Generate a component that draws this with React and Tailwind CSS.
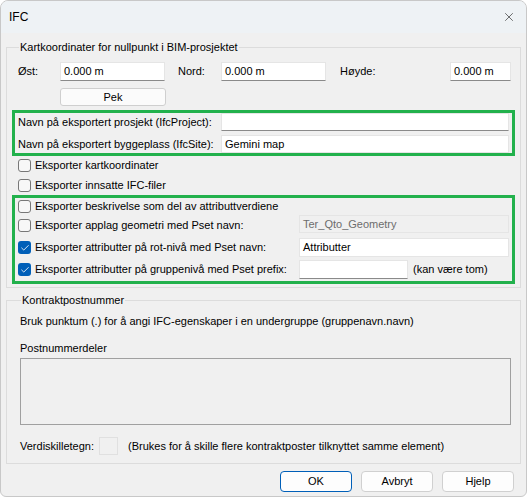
import React from 'react';
import { X, Check } from 'lucide-react';

const font = { fontFamily: '"Segoe UI", "Liberation Sans", Arial, sans-serif' };

const TextBox = ({ value = '', className = '', disabled = false }) => (
  <div
    className={`flex items-center px-[3px] border border-[#e5e5e5] border-b-[#8a8a8a] ${
      disabled ? 'bg-[#f0f0f0] text-[#6d6d6d] border-b-[#e5e5e5]' : 'bg-white text-black'
    } ${className}`}
  >
    {value}
  </div>
);

const CheckBox = ({ checked, label }) => (
  <div className="flex items-center gap-[4px]">
    {checked ? (
      <span className="w-[13px] h-[13px] shrink-0 rounded-[3px] bg-[#005fb8] flex items-center justify-center">
        <Check className="w-[10px] h-[10px] text-white" strokeWidth={2} />
      </span>
    ) : (
      <span className="w-[13px] h-[13px] shrink-0 rounded-[3px] border border-[#777] bg-[#f7f7f7]" />
    )}
    <span>{label}</span>
  </div>
);

const Button = ({ children, primary }) => (
  <button
    className={`w-[72px] h-[21px] rounded-[4px] bg-[#fdfdfd] text-black ${
      primary ? 'border border-[#005fb8]' : 'border border-[#d0d0d0]'
    }`}
  >
    {children}
  </button>
);

export default function App() {
  return (
    <div
      className="w-[527px] h-[497px] bg-[#f0f0f0] text-[11px] leading-[15px] text-black whitespace-nowrap border border-[#c8c8c8] rounded-t-[8px] rounded-b-[6px] overflow-hidden flex flex-col"
      style={font}
    >
      <div className="h-[32px] shrink-0 bg-[#eef2f5] flex items-center justify-between pl-[8px] pr-[10px] text-[12px]">
        <span>IFC</span>
        <X className="w-[14px] h-[14px] text-[#333]" strokeWidth={1.2} />
      </div>

      <div className="flex flex-col px-[5px] pt-[7px]">
        <fieldset className="border border-[#dcdcdc] pb-[3px] pl-[11px] pr-[9px]">
          <legend className="px-[1px] ml-[1px]">Kartkoordinater for nullpunkt i BIM-prosjektet</legend>

          <div className="flex items-center mt-[7px]">
            <span className="w-[42px]">Øst:</span>
            <TextBox value="0.000 m" className="w-[105px] h-[19px]" />
            <span className="ml-[13px] w-[43px]">Nord:</span>
            <TextBox value="0.000 m" className="w-[105px] h-[19px]" />
            <span className="ml-[14px] flex-1">Høyde:</span>
            <TextBox value="0.000 m" className="w-[61px] h-[19px]" />
          </div>

          <div className="ml-[42px] mt-[7px]">
            <button className="w-[106px] h-[18px] rounded-[3px] border border-[#cfcfcf] bg-[#fbfbfb] leading-[14px]">
              Pek
            </button>
          </div>

          <div className="-ml-[6px] -mr-[4px] mt-[4px] border-[3px] border-[#22b14c] px-[3px] flex flex-col gap-[4px]">
            <div className="flex items-center">
              <span className="w-[203px]">Navn på eksportert prosjekt (IfcProject):</span>
              <TextBox className="flex-1 h-[18px]" />
            </div>
            <div className="flex items-center">
              <span className="w-[203px]">Navn på eksportert byggeplass (IfcSite):</span>
              <TextBox value="Gemini map" className="flex-1 h-[18px] border-b-[#e5e5e5]" />
            </div>
          </div>

          <div className="flex flex-col gap-[1px]">
            <div className="h-[19px] flex items-center">
              <CheckBox label="Eksporter kartkoordinater" />
            </div>
            <div className="h-[19px] flex items-center">
              <CheckBox label="Eksporter innsatte IFC-filer" />
            </div>
          </div>

          <div className="-ml-[6px] -mr-[4px] border-[3px] border-[#22b14c] px-[3px] pb-[2px] flex flex-col">
            <div className="h-[17px] flex items-center">
              <CheckBox label="Eksporter beskrivelse som del av attributtverdiene" />
            </div>
            <div className="flex items-center justify-between h-[18px]">
              <div className="pt-[3px]">
                <CheckBox label="Eksporter applag geometri med Pset navn:" />
              </div>
              <TextBox value="Ter_Qto_Geometry" disabled className="w-[210px] h-[18px]" />
            </div>
            <div className="flex items-center justify-between h-[19px] mt-[5px]">
              <CheckBox checked label="Eksporter attributter på rot-nivå med Pset navn:" />
              <TextBox value="Attributter" className="w-[210px] h-[19px] border-b-[#e5e5e5]" />
            </div>
            <div className="flex items-center h-[19px] mt-[3px]">
              <span className="flex-1">
                <CheckBox checked label="Eksporter attributter på gruppenivå med Pset prefix:" />
              </span>
              <TextBox className="w-[109px] h-[19px]" />
              <span className="w-[101px] pl-[5px]">(kan være tom)</span>
            </div>
          </div>
        </fieldset>

        <fieldset className="mt-[5px] border border-[#dcdcdc] pl-[13px] pr-[9px] pb-[8px]">
          <legend className="px-[1px] ml-[1px]">Kontraktpostnummer</legend>
          <div className="mt-[6px]">Bruk punktum (.) for å angi IFC-egenskaper i en undergruppe (gruppenavn.navn)</div>
          <div className="mt-[12px]">Postnummerdeler</div>
          <div className="mt-[2px] h-[67px] border border-[#a0a0a0] bg-[#f0f0f0]" />
          <div className="flex items-center mt-[12px]">
            <span className="w-[79px]">Verdiskilletegn:</span>
            <span className="w-[19px] h-[18px] border border-[#e0e0e0] bg-[#f0f0f0]" />
            <span className="ml-[10px]">(Brukes for å skille flere kontraktposter tilknyttet samme element)</span>
          </div>
        </fieldset>

        <div className="flex justify-end gap-[9px] mt-[7px] pr-[7px]">
          <Button primary>OK</Button>
          <Button>Avbryt</Button>
          <Button>Hjelp</Button>
        </div>
      </div>
    </div>
  );
}
